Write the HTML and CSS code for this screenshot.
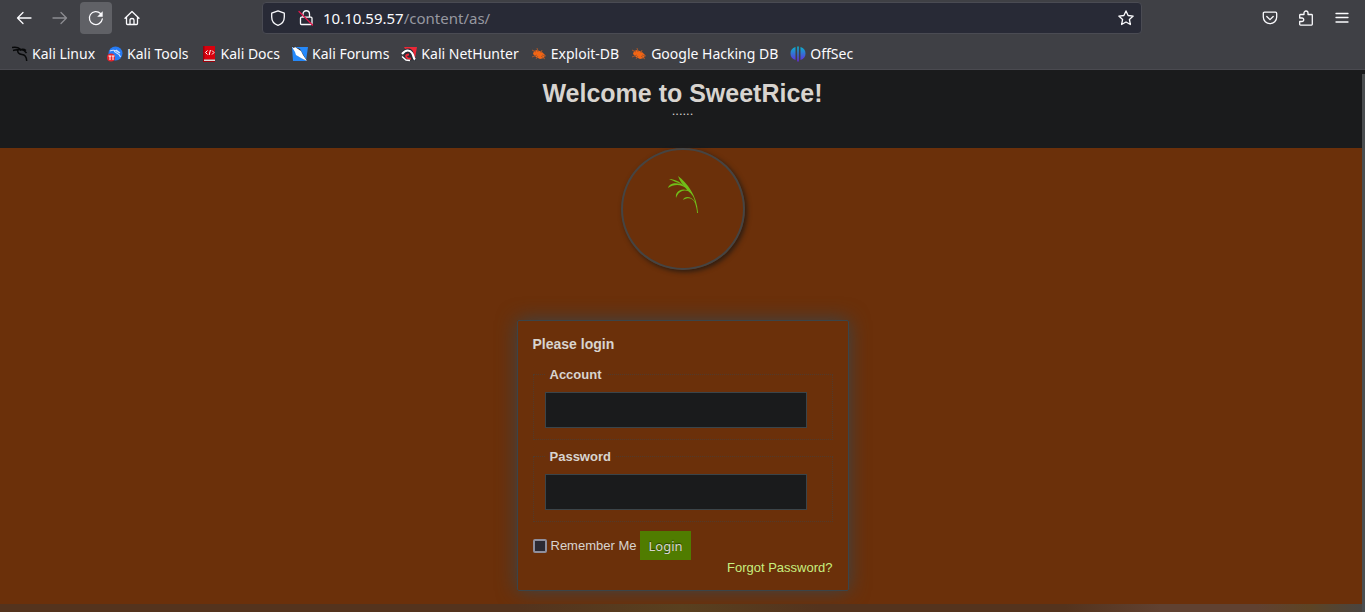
FILE: index.html
```
<!DOCTYPE html>
<html lang="en">
<head>
<meta charset="utf-8">
<title>Welcome to SweetRice!</title>
<link rel="stylesheet" href="styles.css">
</head>
<body>
<div class="browser">
  <header class="chrome">
    <div class="toolbar">
      <div class="nav">
        <button class="tool" aria-label="Back"><svg viewBox="0 0 16 16"><path d="M15 8H1.5M7 2.5L1.5 8L7 13.5"/></svg></button>
        <button class="tool dim" aria-label="Forward"><svg viewBox="0 0 16 16"><path d="M1 8h13.500M9 2.500L14.500 8L9 13.500"/></svg></button>
        <button class="tool active" aria-label="Reload"><svg viewBox="0 0 16 16"><path d="M14.300 9A6.500 6.500 0 1 1 12.500 3.500"/><path class="solid" d="M14.700 1.300v5.500H9.200z"/></svg></button>
        <button class="tool" aria-label="Home"><svg viewBox="0 0 16 16"><path d="M1 8.300L8 1.500L15 8.300M2.500 7v6.500q0 1 1 1h9q1 0 1-1V7M6 14.500V10q0-1.500 2-1.500t2 1.500v4.500"/></svg></button>
      </div>
      <div class="urlbar">
        <svg viewBox="0 0 16 16"><path d="M8 .8L14.300 3.200V7c0 4-2.300 7-6.300 8.300C4 14 1.700 11 1.700 7V3.200z"/></svg>
        <svg viewBox="0 0 16 16"><path d="M5 7V4a3 3 0 0 1 6.500 0v3M3.500 7.200h9.500q1 0 1 1v5.300q0 1-1 1H3.500q-1 0-1-1V8.200q0-1 1-1z"/><path class="slash" d="M1 1.500L14.500 15"/></svg>
        <div class="address"><span class="host">10.10.59.57</span>/content/as/</div>
        <svg viewBox="0 0 16 16"><path d="M8 .9l2.100 4.600 5.100.6-3.800 3.400 1 5L8 12l-4.400 2.500 1-5L.8 6.100l5.100-.6z"/></svg>
      </div>
      <div class="menus">
        <button class="tool" aria-label="Pocket"><svg viewBox="0 0 16 16"><path d="M2.500 2.200h11q1.200 0 1.200 1.200V7a6.700 6.700 0 0 1-13.400 0V3.400q0-1.200 1.200-1.200zM4.800 6.500L8 9.600l3.200-3.100"/></svg></button>
        <button class="tool" aria-label="Extensions"><svg viewBox="0 0 16 16"><path d="M2.500 4.500H6V3a2 2 0 0 1 4 0v1.500h3.500q.8 0 .8.800v9q0 .8-.8.800h-11q-.8 0-.8-.8V11.500H4a1.700 1.700 0 0 0 0-3.500H1.700V5.300q0-.8.800-.8z"/></svg></button>
        <button class="tool" aria-label="Menu"><svg viewBox="0 0 16 16"><path d="M2 3.500h12M2 7.500h12M2 12h12"/></svg></button>
      </div>
    </div>
    <nav class="bookmarks">
      <a href="#"><svg viewBox="0 0 16 16"><g class="dragon"><path d="M0 1.500c3-.7 6-.4 8.500 1.800M1 4.500c3-.8 5-.5 7-1M6 3.500c-1 3 1 4.800 4 5 3 .2 4.500 2.500 4.700 6.500M8 4.500c2-1.500 4-.8 6.500 2.500M8 4c2-1 4-1 6 .5"/></g></svg>Kali Linux</a>
      <a href="#"><svg viewBox="0 0 16 16"><circle cx="8.500" cy="7.500" r="7" fill="#267bf5"/><path d="M3 5c4-2 7 0 9 1.500M7 4c0 4 5 2 6.500 7M9 4l4 3" fill="none" stroke="#cfe4ff" stroke-width="1.100"/><circle cx="4" cy="11.500" r="4" fill="#e5242c"/><path d="M1.500 10h3M3 10v4M5 10h2.500M6 10v4" stroke="#fff" fill="none"/></svg>Kali Tools</a>
      <a href="#"><svg viewBox="0 0 16 16"><path fill="#9d000a" d="M2 0h12v16H2z"/><path fill="#d9000d" d="M3.500 0H14v13H3.500z"/><path fill="#ddd" d="M3 13.500h11V15H3z"/><path d="M6.500 4.500l-2 2 2 2M11 4.500l2 2-2 2M9.400 4L8.200 9" fill="none" stroke="#fff"/></svg>Kali Docs</a>
      <a href="#"><svg viewBox="0 0 16 16"><path fill="#2589fa" d="M0 1h16l-2 14H1z"/><path fill="#292c35" d="M0 0l8 3 7 12-9-5z"/><path fill="#fff" d="M0 1l2 1 1-1 6 4 2 4 4 6-6-3-5-3-1-3z"/></svg>Kali Forums</a>
      <a href="#"><svg viewBox="0 0 16 16"><path fill="#ed2837" d="M3 1h13l-2 11-4 2z"/><path fill="#292c35" d="M0 8C1 3 8 1 11 4c3 3 0 5 4 11l-4-1-2 1H5L0 11l4-2z"/><path d="M1 8C5 3 9 4 11 7s1 5 3 6.500" fill="none" stroke="#fff" stroke-width="2.200"/><path d="M8 8.500c-5 0-3 5 2 4" fill="none" stroke="#ed2837" stroke-width="2"/><path d="M1 10.500l4 3.500 4 .5" fill="none" stroke="#fff" stroke-width="1.500"/></svg>Kali NetHunter</a>
      <a href="#"><svg viewBox="0 0 16 16"><path fill="#f26514" d="M3 5l3-1 5 2 3 3-1 3-4 1-4-2-3-3z"/><path class="legs" d="M1 4l4 2M6 2l1 4M11 4l-1 3M15 10l-4-1M14 13l-4-3M1 11l5-2M5 13l2-3"/></svg>Exploit-DB</a>
      <a href="#"><svg viewBox="0 0 16 16"><path fill="#f26514" d="M3 5l3-1 5 2 3 3-1 3-4 1-4-2-3-3z"/><path class="legs" d="M1 4l4 2M6 2l1 4M11 4l-1 3M15 10l-4-1M14 13l-4-3M1 11l5-2M5 13l2-3"/></svg>Google Hacking DB</a>
      <a href="#"><svg viewBox="0 0 16 16"><defs><linearGradient id="offsec" x2="0" y2="1"><stop stop-color="#08b5cd"/><stop offset="1" stop-color="#6528dc"/></linearGradient></defs><path fill="url(#offsec)" d="M5.500 1v13C2 13 .5 10.500.5 7.500S2 2 5.500 1zM7.200.5h1.600v15H7.200zM10.500 1c3.500 1 5 3.500 5 6.500s-1.500 5.500-5 6.500z"/></svg>OffSec</a>
    </nav>
  </header>
  <main class="page">
    <section class="banner">
      <h1>Welcome to SweetRice!</h1>
      <p>......</p>
    </section>
    <section class="content">
      <div class="logo"><svg viewBox="0 0 32 40"><path d="M31 38C30 20 20 8 11 1C13 6 15 9 17 11C12 6 7 4 2 4C7 6 11 8 14 9C7 7 2 9 1 13C5 10 11 9 15 11C18 12 19 13 20 15C13 13 8 17 9 23C11 17 16 14 21 16C25 19 27 22 28 27C25 22 18 20 16 25C21 22 26 23 28 28C29 31 30 35 30 38z"/></svg></div>
      <form class="login">
        <h2>Please login</h2>
        <fieldset><legend><label for="account">Account</label></legend><input id="account" type="text"></fieldset>
        <fieldset><legend><label for="password">Password</label></legend><input id="password" type="password"></fieldset>
        <div class="actions">
          <input id="remember" type="checkbox"><label for="remember">Remember Me</label>
          <button type="button">Login</button>
        </div>
        <a class="forgot" href="#">Forgot Password?</a>
      </form>
    </section>
    <div class="desktop-edge"></div>
    <div class="scroll-thumb"></div>
  </main>
</div>
</body>
</html>
```

FILE: styles.css
```
* { box-sizing: border-box; }
body { margin: 0; font: 13px/15px "Liberation Sans", Arial, sans-serif; color: #d8d4cf; background: #6b300a; }
.browser { min-height: 100vh; display: flex; flex-direction: column; }
svg { display: block; fill: none; flex: none; }
.chrome { height: 70px; background: #3f4045; border-bottom: 1px solid #4a4a50; color: #fbfbfe; font-family: "Noto Sans", sans-serif; }
.toolbar { height: 36px; display: flex; align-items: center; padding: 0 7px 0 8px; }
.nav, .menus { flex: 1; display: flex; gap: 4px; }
.menus { justify-content: flex-end; }
.tool { width: 32px; height: 32px; padding: 8px; border: 0; border-radius: 4px; background: none; color: #fbfbfe; }
.tool svg, .urlbar svg { width: 16px; height: 16px; stroke: currentColor; stroke-width: 1.3; stroke-linejoin: round; stroke-linecap: round; }
.tool.dim { color: #8c8c91; }
.tool.active { background: #606166; }
.tool .solid { fill: currentColor; stroke: none; }
.urlbar svg .slash { stroke: #e3174b; }
.urlbar { flex: 0 1 880px; height: 32px; margin-left: 38px; padding: 0 7px; display: flex; align-items: center; gap: 12px; background: #282a36; border: 1px solid #4a4b53; border-radius: 4px; color: #fbfbfe; }
.address { flex: 1; margin-left: -3px; font-size: 15px; line-height: 24px; color: #9798a0; }
.host { color: #fbfbfe; }
.bookmarks { height: 33px; display: flex; align-items: center; gap: 12px; padding: 3px 12px 0; }
.bookmarks a { display: flex; align-items: center; gap: 4px; color: inherit; text-decoration: none; font-size: 14px; line-height: 20px; white-space: nowrap; }
.bookmarks svg { width: 16px; height: 16px; }
.dragon { stroke: #08090a; stroke-width: 1.5; }
.legs { stroke: #a95528; stroke-width: 1; }
.page { position: relative; flex: 1; display: flex; flex-direction: column; }
.banner { height: 78px; padding-top: 9px; background: #1a1b1c; text-align: center; }
.banner h1 { margin: 0; font-size: 25px; line-height: 28px; }
.banner p { margin: 0; line-height: 8px; }
.content { flex: 1; display: flex; flex-direction: column; align-items: center; padding-bottom: 13px; }
.logo { width: 124px; height: 122px; padding: 25px 44px; border: 2px solid #454443; border-radius: 50%; box-shadow: 2px 2px 5px #2b1c12; }
.logo svg { width: 32px; height: 40px; fill: #71bd19; }
.login { width: 332px; margin-top: 50px; padding: 15px; border: 1px solid #3b4449; border-radius: 2px; box-shadow: 0 0 20px #3b4449; }
.login h2 { margin: 0 0 14px; font-size: 14px; line-height: 17px; }
fieldset { margin: 0 0 9px; padding: 10px 11px 11px; border: 1px dotted #513a2b; min-width: 0; }
legend { padding: 0 5px; font-weight: bold; }
fieldset input { display: block; width: 262px; max-width: 100%; height: 36px; padding: 8px; border: 1px solid #3b4449; background: #1a1b1c; color: inherit; }
.actions { display: flex; align-items: center; gap: 4px; }
.actions input { appearance: none; width: 14px; height: 14px; margin: 0; border: 2px solid #8f8f9d; border-radius: 2px; background: #2b2a33; }
.actions button { height: 29px; padding: 0 8px; border: 0; background: #507c00; color: #d8d4cf; font: 13px/18px "Noto Sans", sans-serif; text-shadow: 0 -1px 1px #263b00; }
.forgot { display: block; text-align: right; color: #c7ef7f; text-decoration: none; }
.desktop-edge { height: 8px; background: linear-gradient(90deg, #54331d 0 38%, #59401f 50%, #54331d 60% 78%, #604131 85% 92%, #5d4425 96%, #494440 100%); }
.scroll-thumb { position: absolute; top: 4px; right: 0; bottom: 0; width: 3px; background: #4a4d4f; }
```
